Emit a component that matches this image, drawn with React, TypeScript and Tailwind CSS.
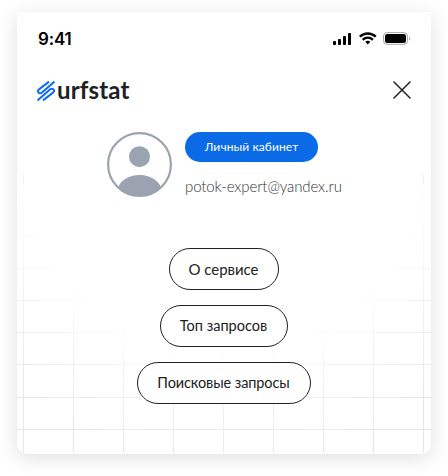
const columns = [6, 56, 106, 156, 206, 256, 306, 356, 406];
const rows = [160, 192, 224, 256, 288, 320, 352, 385, 417];

function GridBackdrop() {
  return (
    <svg className="pointer-events-none absolute inset-0" width="414" height="442" viewBox="0 0 414 442" aria-hidden="true">
      <defs>
        <radialGradient id="fade" gradientUnits="userSpaceOnUse" cx="206" cy="138" r="310">
          <stop offset="0.63" stopColor="#ececec" stopOpacity="0" />
          <stop offset="0.8" stopColor="#eaeaea" stopOpacity="0.6" />
          <stop offset="1" stopColor="#e8e8e8" stopOpacity="1" />
        </radialGradient>
      </defs>
      {columns.map((x) => (
        <rect key={x} x={x} y="146" width="1" height="295" fill="url(#fade)" />
      ))}
      {rows.map((y) => (
        <rect key={y} x="0" y={y} width="414" height="1" fill="url(#fade)" />
      ))}
      <rect x="6" y="162" width="1" height="11" fill="#eaf2fa" />
      <rect x="406" y="162" width="1" height="11" fill="#eaf2fa" />
    </svg>
  );
}

function StatusIcons() {
  return (
    <svg width="80" height="14" viewBox="0 0 80 14" aria-hidden="true">
      <rect x="0" y="9" width="3" height="4" rx="0.8" />
      <rect x="5" y="7" width="3" height="6" rx="0.8" />
      <rect x="10" y="4" width="3" height="9" rx="0.8" />
      <rect x="15" y="1" width="3" height="12" rx="0.8" />
      <g fill="none" stroke="#000" strokeWidth="2.3">
        <path d="M26.8 4.7C31.3.4 38.3.4 42.8 4.7" />
        <path d="M29.7 7.8C32.6 5 37 5 39.9 7.8" />
      </g>
      <path d="M34.8 12.5 32.2 9.8Q34.8 7.7 37.4 9.8Z" />
      <rect x="50.5" y="0.6" width="24" height="11.7" rx="3.5" fill="none" stroke="#a6a6a6" strokeWidth="1" />
      <rect x="52" y="2" width="21" height="9" rx="2.2" />
      <path d="M76.2 4.5v4c1.5-.6 1.5-3.4 0-4Z" fill="#a6a6a6" />
    </svg>
  );
}

function Logo() {
  return (
    <div className="flex h-6 items-center">
      <svg className="mt-0.5" width="18" height="20" viewBox="0 0 18 20" fill="none" stroke="#0c6cf2" strokeWidth="2" strokeLinejoin="round" aria-hidden="true">
        <path d="M12 .6 2 8.4Q0 10.4 1.8 11.8Q3.4 12.8 5 11.4L17.4.6" />
        <path d="M6 19.4 16 11.6Q18 9.6 16.2 8.2Q14.6 7.2 13 8.6L.6 19.4" />
      </svg>
      <span className="ml-[2px] font-['Lato',sans-serif] text-[24px] leading-6 font-bold tracking-[0.15px] text-[#202124]">urfstat</span>
    </div>
  );
}

function Avatar() {
  return (
    <svg className="shrink-0" width="65" height="65" viewBox="0 0 65 65" aria-hidden="true">
      <clipPath id="avatar">
        <circle cx="32.5" cy="32.5" r="32" />
      </clipPath>
      <circle cx="32.5" cy="32.5" r="31.4" fill="#fff" stroke="#9ba3b1" strokeWidth="2.2" />
      <circle cx="32.5" cy="24.7" r="10.5" fill="#9ba3b1" />
      <ellipse cx="32.5" cy="59" rx="22" ry="16" fill="#9ba3b1" clipPath="url(#avatar)" />
    </svg>
  );
}

const pill = "flex h-[42px] items-center justify-center rounded-full border border-[#202124] bg-white whitespace-nowrap text-[#202124] font-normal";

export default function App() {
  return (
    <main className="h-[476px] w-[448px] overflow-hidden bg-white pt-3 pl-[17px] font-['Lato','Noto_Sans',sans-serif]">
      <section className="relative h-[442px] w-[414px] rounded-b-[10px] bg-white shadow-[0_4px_20px_rgba(0,0,0,0.13)]">
        <GridBackdrop />
        <div className="relative">
          <div className="flex h-[53px] items-center justify-between pr-[18px] pl-[21px]">
            <span className="font-['Inter',sans-serif] text-[17px] leading-5 font-semibold tracking-[-0.2px] text-black">9:41</span>
            <StatusIcons />
          </div>
          <header className="flex h-[50px] items-center justify-between pr-[20px] pl-[20px]">
            <Logo />
            <button aria-label="Закрыть">
              <svg width="18" height="18" viewBox="0 0 18 18" stroke="#202124" strokeWidth="1.5" strokeLinecap="round">
                <path d="m1 1 16 16M17 1 1 17" />
              </svg>
            </button>
          </header>
          <div className="flex gap-[13px] pt-[17px] pl-[90px]">
            <Avatar />
            <div>
              <button className="flex h-[30px] w-[133px] items-center justify-center rounded-full bg-[#0b6be6] text-[12px] tracking-[0.1px] whitespace-nowrap text-white">Личный кабинет</button>
              <p className="mt-3 text-[15px] leading-6 font-light tracking-[-0.1px] whitespace-nowrap text-[#333]">potok-expert@yandex.ru</p>
            </div>
          </div>
          <nav className="mt-[50px] mr-px flex flex-col items-center gap-[15px]">
            <button className={`${pill} w-[110px] text-[15px] tracking-[-0.05px]`}>О сервисе</button>
            <button className={`${pill} w-[128px] text-[14.5px]`}>Топ запросов</button>
            <button className={`${pill} w-[174px] text-[14.5px] tracking-[-0.1px]`}>Поисковые запросы</button>
          </nav>
        </div>
      </section>
    </main>
  );
}
